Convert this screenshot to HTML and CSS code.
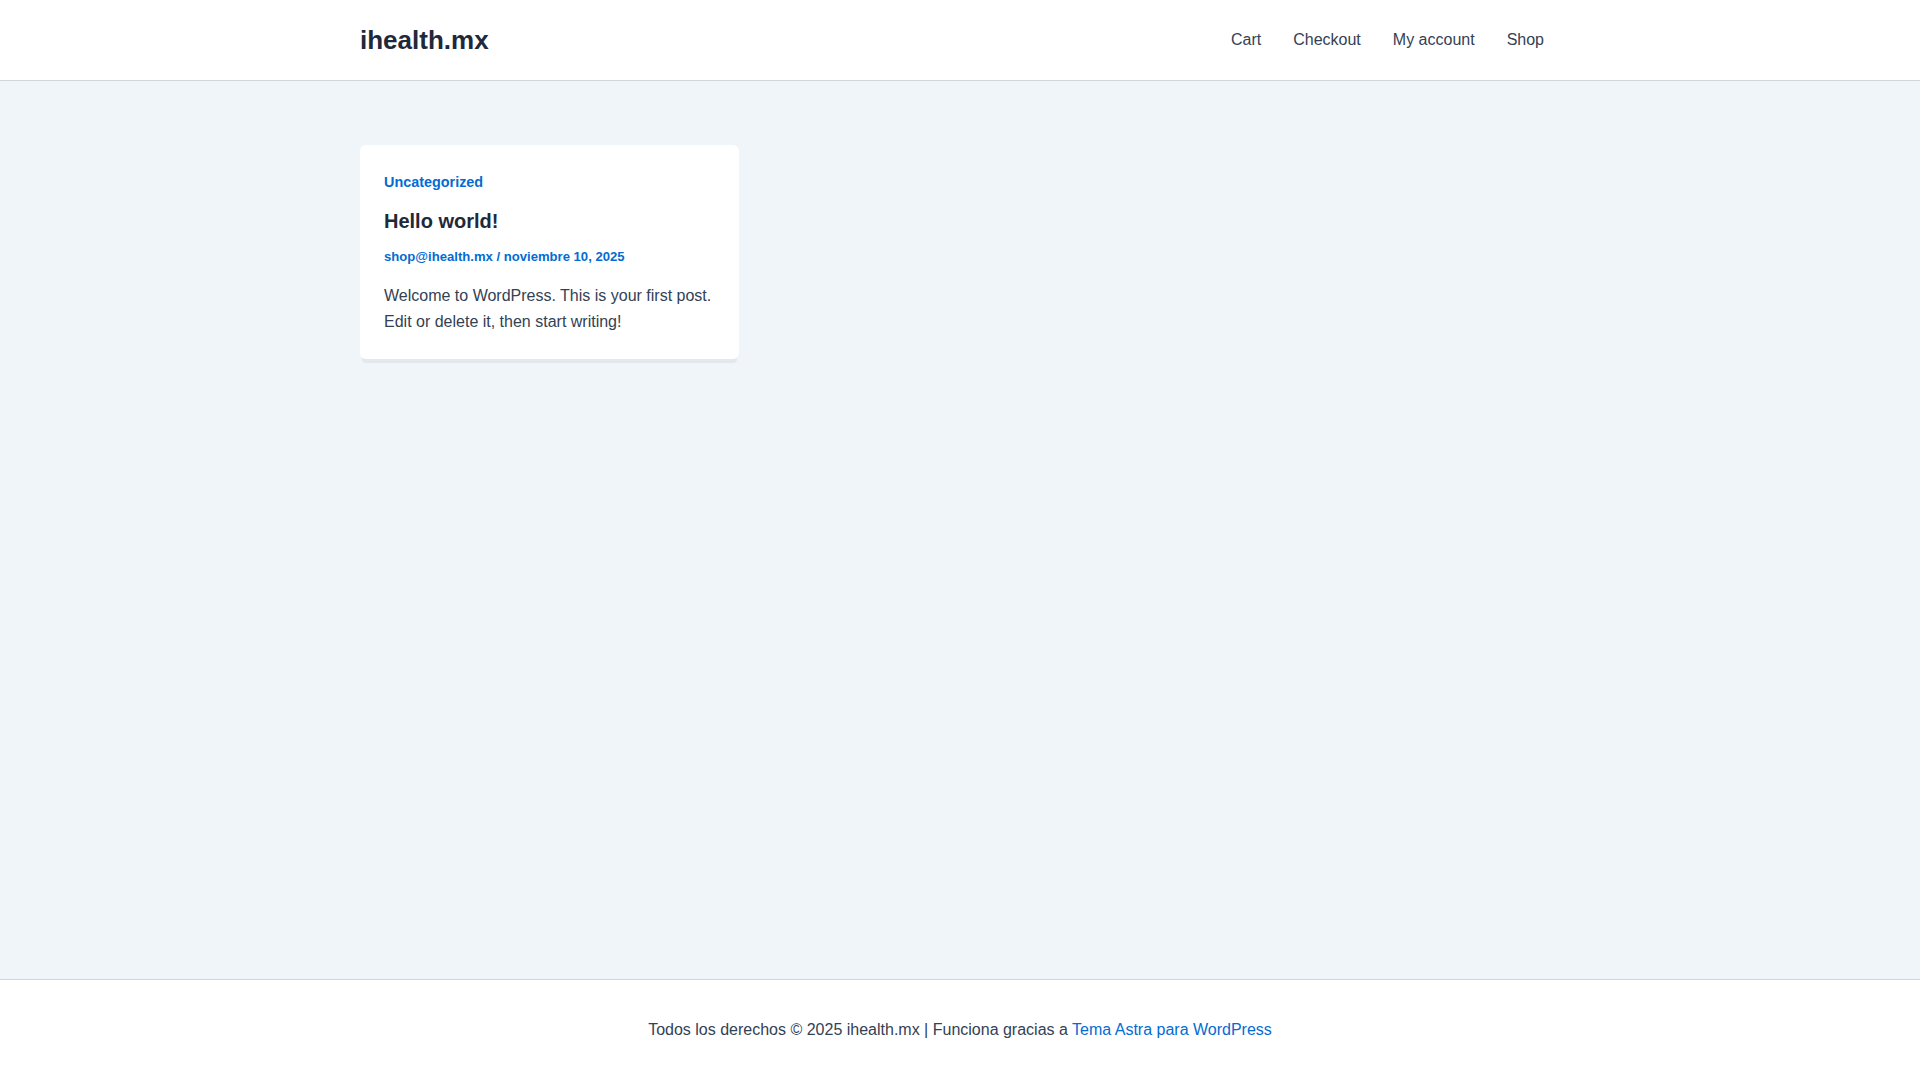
FILE: index.html
```html
<!DOCTYPE html>
<html lang="es">
<head>
<meta charset="utf-8">
<title>ihealth.mx</title>
<link rel="stylesheet" href="styles.css">
</head>
<body>
<header class="site-header">
  <div class="container header-inner">
    <a class="site-title" href="#">ihealth.mx</a>
    <nav class="main-nav">
      <a href="#">Cart</a>
      <a href="#">Checkout</a>
      <a href="#">My account</a>
      <a href="#">Shop</a>
    </nav>
  </div>
</header>
<main class="site-main">
  <div class="container posts-grid">
    <article class="post-card">
      <a class="post-cat" href="#">Uncategorized</a>
      <h2 class="post-title">Hello world!</h2>
      <div class="post-meta"><a href="#">shop@ihealth.mx</a> / <a href="#">noviembre 10, 2025</a></div>
      <p class="post-excerpt">Welcome to WordPress. This is your first post. Edit or delete it, then start writing!</p>
    </article>
  </div>
</main>
<footer class="site-footer">
  <p>Todos los derechos © 2025 ihealth.mx | Funciona gracias a <a href="#">Tema Astra para WordPress</a></p>
</footer>
</body>
</html>
```
FILE: styles.css
```css
* { box-sizing: border-box; }
html, body { margin: 0; padding: 0; }
body {
  font-family: "Liberation Sans", Arial, sans-serif;
  font-size: 16px;
  color: #334155;
  background: #f0f5fa;
  min-height: 100vh;
  display: flex;
  flex-direction: column;
}
a { text-decoration: none; color: #046bd2; }
.container { width: 1200px; margin: 0 auto; }

.site-header {
  background: #fff;
  border-bottom: 1px solid #d1d5db;
}
.header-inner {
  height: 80px;
  display: flex;
  align-items: center;
  justify-content: space-between;
}
.site-title {
  font-size: 26px;
  font-weight: 700;
  color: #1e293b;
  line-height: 1;
}
.main-nav { display: flex; }
.main-nav a {
  color: #334155;
  padding: 0 16px;
  font-size: 16px;
  line-height: 80px;
}

.site-main { flex: 1; padding-top: 64px; }
.posts-grid {
  display: grid;
  grid-template-columns: repeat(3, 1fr);
  gap: 32px;
  align-items: start;
}
.post-card {
  background: #fff;
  border-radius: 6px;
  padding: 25px 24px 23px;
  box-shadow: 0 6px 0 -2px #e3e8ee;
}
.post-cat {
  display: block;
  font-size: 14.4px;
  font-weight: 700;
  line-height: 25px;
}
.post-title {
  margin: 11px 0 0;
  font-size: 20px;
  font-weight: 700;
  line-height: 30px;
  color: #1e293b;
}
.post-meta {
  margin-top: 11px;
  font-size: 13.1px;
  font-weight: 700;
  line-height: 20px;
  color: #046bd2;
}
.post-excerpt {
  margin: 16px 0 0;
  line-height: 26.4px;
}

.site-footer {
  background: #fff;
  border-top: 1px solid #d1d5db;
  padding: 37px 0 37px;
  text-align: center;
}
.site-footer p { margin: 0; line-height: 26px; }
```
